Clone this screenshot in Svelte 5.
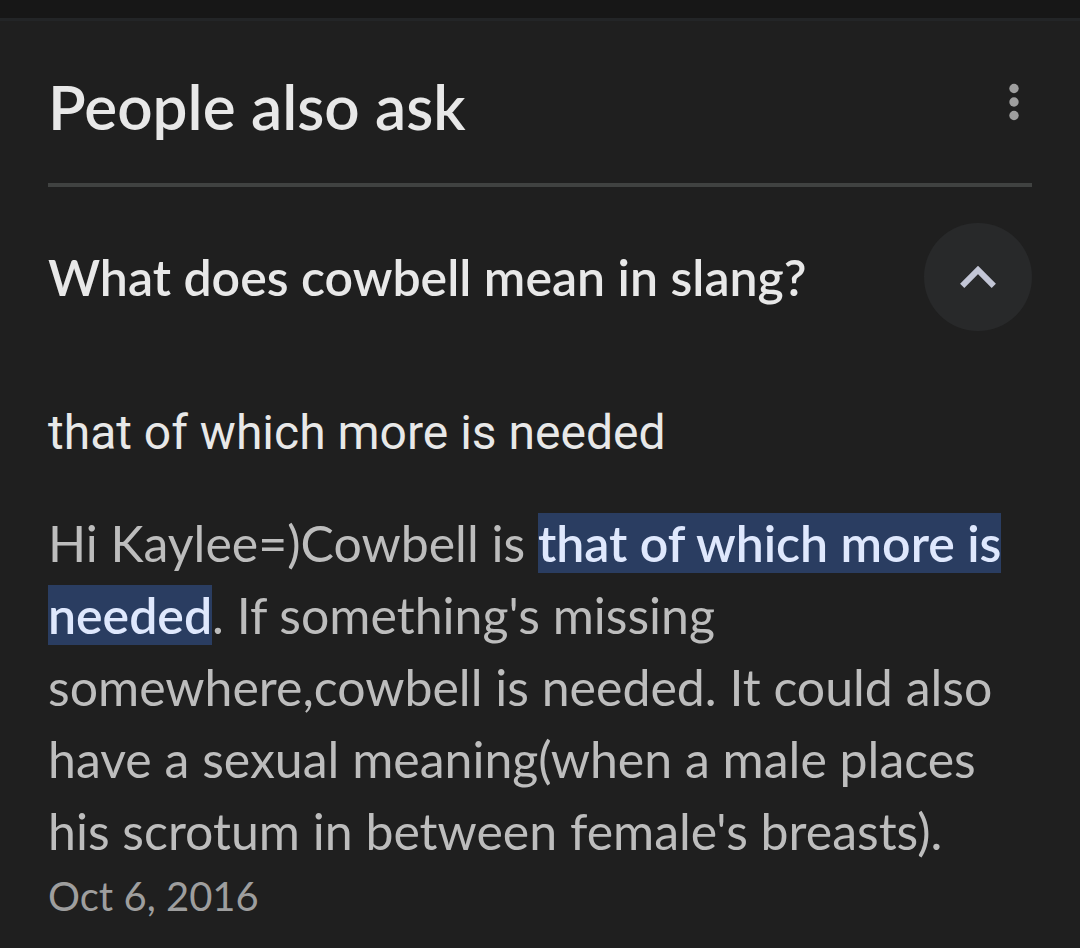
<script lang="ts">
  let open = true;

  function toggle() {
    open = !open;
  }
</script>

<main class="panel">
  <header class="heading">
    <h1>People also ask</h1>
    <button type="button" class="menu" aria-label="About this result">
      <svg width="12" height="40" viewBox="0 0 12 40" aria-hidden="true">
        <circle cx="6" cy="6.5" r="4.7" />
        <circle cx="6" cy="20" r="4.7" />
        <circle cx="6" cy="33.5" r="4.7" />
      </svg>
    </button>
  </header>

  <section>
    <div class="question">
      <h2 id="question">What does cowbell mean in slang?</h2>
      <button
        type="button"
        class="toggle"
        class:closed={!open}
        aria-expanded={open}
        aria-labelledby="question"
        on:click={toggle}
      >
        <svg width="36" height="24" viewBox="0 0 36 24" aria-hidden="true">
          <path d="M2.2 20.8 18 5l15.8 15.8" />
        </svg>
      </button>
    </div>
    {#if open}
      <div class="answer">
        <h3>that of which more is needed</h3>
        <p>
          Hi Kaylee=)Cowbell is <mark>that of which more is needed</mark>. If something's missing
          somewhere,cowbell is needed. It could also have a sexual meaning(when a male places his
          scrotum in between female's breasts).
        </p>
        <time datetime="2016-10-06">Oct 6, 2016</time>
      </div>
    {/if}
  </section>
</main>

<style>
  :global(body) {
    background: #1f1f1f;
  }
  .panel {
    border-top: 18px solid #171717;
    box-shadow: inset 0 3px #232527;
    padding: 48px 48px 20px;
    font-family: "Google Sans", Lato, "Liberation Sans", sans-serif;
    color: #e8e8e8;
  }
  h1,
  h2,
  h3,
  p {
    margin: 0;
  }
  button {
    border: none;
    padding: 0;
    cursor: pointer;
  }
  svg {
    display: block;
  }
  .heading {
    display: flex;
    justify-content: space-between;
    align-items: flex-start;
    padding-bottom: 37px;
    border-bottom: 4px solid #404241;
  }
  h1 {
    font-size: 62px;
    line-height: 80px;
    font-weight: 600;
  }
  .menu {
    background: none;
    padding: 16px 12px;
  }
  .menu circle {
    fill: #9e9e9e;
  }
  .question {
    display: flex;
    justify-content: space-between;
    align-items: center;
    padding: 36px 0;
  }
  h2 {
    font-size: 50px;
    line-height: 60px;
    font-weight: 600;
  }
  .toggle {
    display: grid;
    place-items: center;
    flex: none;
    width: 108px;
    height: 108px;
    border-radius: 50%;
    background: #28292a;
  }
  .toggle path {
    fill: none;
    stroke: #c3c6d6;
    stroke-width: 6;
  }
  .closed svg {
    transform: rotate(180deg);
  }
  h3 {
    padding: 36px 0 44px;
    font-family: Roboto, "Liberation Sans", sans-serif;
    font-size: 48px;
    line-height: 60px;
    font-weight: 400;
  }
  p {
    font-size: 50px;
    line-height: 72px;
    color: #bdbdbd;
  }
  mark {
    background: #2a3d61;
    color: #dfe8fd;
    font-weight: 600;
  }
  time {
    font-size: 40px;
    line-height: 58px;
    color: #9e9e9e;
  }
</style>
